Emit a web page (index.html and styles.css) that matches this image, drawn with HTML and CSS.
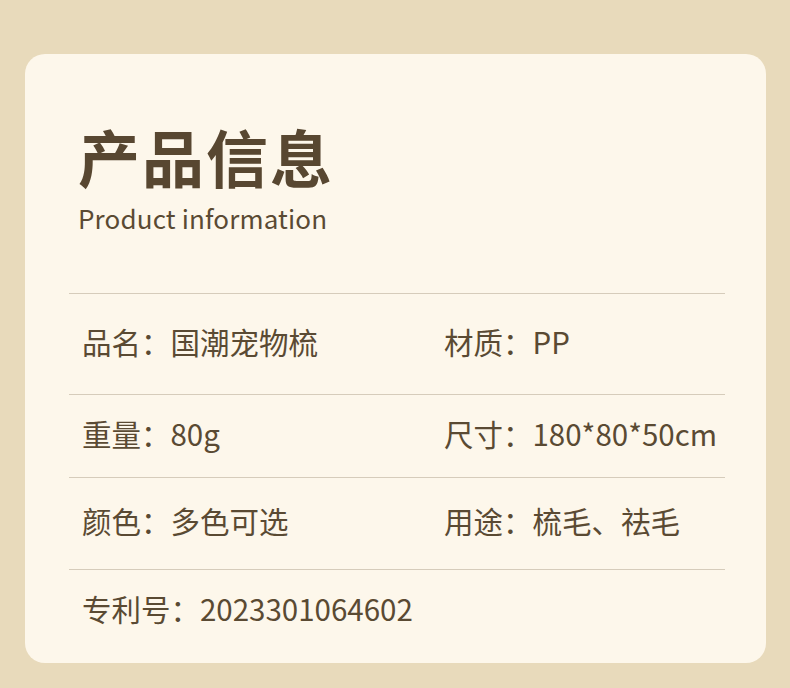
FILE: index.html
```html
<!DOCTYPE html>
<html lang="zh-CN">
<head>
  <meta charset="UTF-8" />
  <meta name="viewport" content="width=device-width, initial-scale=1.0" />
  <title>产品信息</title>
  <link rel="stylesheet" href="styles.css">
</head>
<body>
  <div class="card">
    <div class="title">
      <h1>产品信息</h1>
      <p class="subtitle">Product information</p>
    </div>

    <div class="specs">
      <div class="row row-1">
        <span class="cell">品名：国潮宠物梳</span>
        <span class="cell">材质：PP</span>
      </div>
      <div class="row row-2">
        <span class="cell">重量：80g</span>
        <span class="cell">尺寸：180*80*50cm</span>
      </div>
      <div class="row row-3">
        <span class="cell">颜色：多色可选</span>
        <span class="cell">用途：梳毛、祛毛</span>
      </div>
      <div class="row row-4">
        <span class="cell">专利号：2023301064602</span>
      </div>
    </div>
  </div>
</body>
</html>
```

FILE: styles.css
```css
/* Product info card */
body {
  margin: 0;
  background: #e8dabb;
  font-family: "Noto Sans CJK SC", "Noto Sans", sans-serif;
  color: #5a4a33;
}
.card {
  margin: 54px 24px 0 25px;
  width: 741px;
  height: 609px;
  box-sizing: border-box;
  background: #fdf7eb;
  border-radius: 20px;
  padding: 66px 41px 0 44px;
}
.title { padding-left: 9px; }
h1 {
  margin: 0;
  font-size: 62px;
  line-height: 72px;
  font-weight: 700;
  color: #584731;
  letter-spacing: 2px;
}
.subtitle {
  margin: 9px 0 0;
  font-size: 26px;
  line-height: 34px;
  letter-spacing: 0.15px;
}
.specs {
  margin-top: 58px;
  border-top: 1px solid #d6ccbb;
}
.row {
  display: grid;
  grid-template-columns: 362px 1fr;
  align-items: center;
  padding: 0 0 7px 13px;
  font-size: 29.5px;
  border-bottom: 1px solid #d6ccbb;
}
.row-1 { height: 93px; }
.row-2 { height: 75px; }
.row-3 { height: 84px; }
.row-4 { height: 76px; padding-bottom: 4px; border-bottom: none; }
.cell { white-space: nowrap; }
```
